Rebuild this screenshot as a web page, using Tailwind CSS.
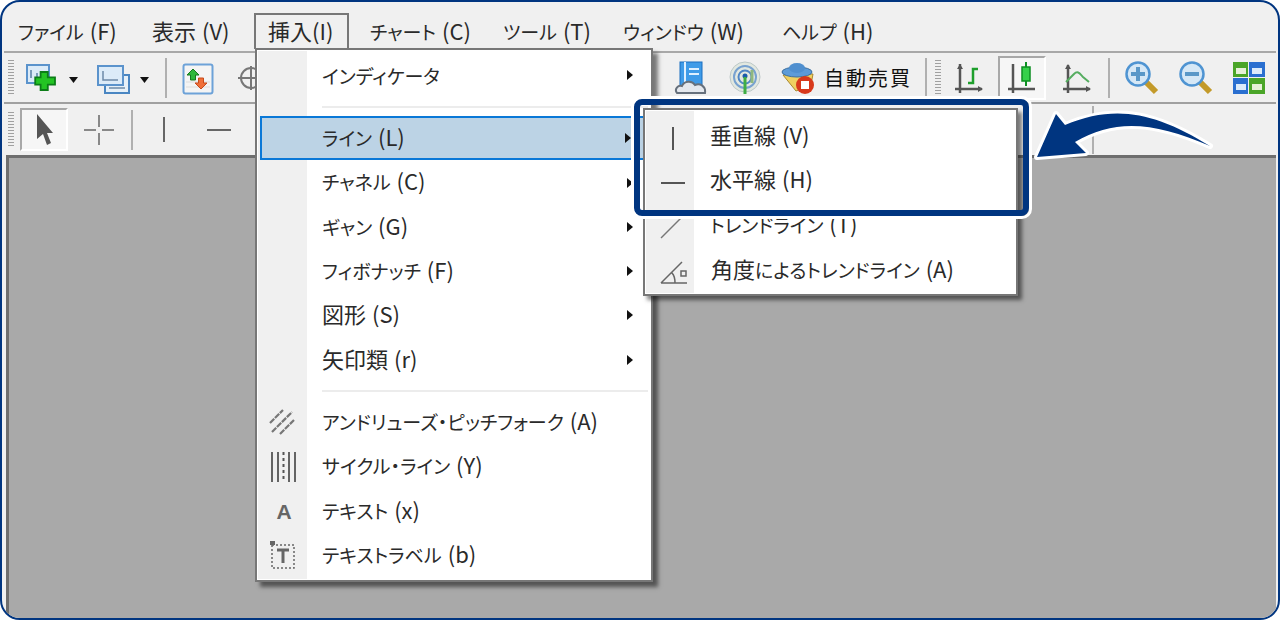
<!DOCTYPE html>
<html lang="ja">
<head>
<meta charset="UTF-8">
<title>挿入メニュー</title>
<script src="https://cdn.jsdelivr.net/npm/@tailwindcss/browser@4"></script>
</head>
<body class="bg-white">
<div class="relative w-[1280px] h-[620px] overflow-hidden border-2 border-[#003580] rounded-[20px] bg-[#f0f0f0] text-[#2a2a2a] text-[19px] [font-feature-settings:'palt'] font-['Noto_Sans_CJK_JP','Noto_Sans',sans-serif] flex flex-col">

  <!-- menu bar -->
  <div class="h-[49px] shrink-0 flex items-center pl-[16px] pt-[6px] leading-none">
    <span class="w-[134px]">ファイル<span class="ml-[1px] text-[22px]"> (F)</span></span>
    <span class="w-[116px] text-[22px]">表示<span class="ml-[1px]"> (V)</span></span>
    <span class="w-[102px] text-[22px]">挿入(I)</span>
    <span class="w-[133px]">チャート<span class="ml-[1px] text-[22px]"> (C)</span></span>
    <span class="w-[120px]">ツール<span class="ml-[1px] text-[22px]"> (T)</span></span>
    <span class="w-[159px]">ウィンドウ<span class="ml-[1px] text-[22px]"> (W)</span></span>
    <span>ヘルプ<span class="ml-[1px] text-[22px]"> (H)</span></span>
  </div>

  <!-- toolbar 1 -->
  <div class="h-[53px] shrink-0 mx-[2px] border-y-2 border-[#a8a8a8] border-b-[#a0a0a0] flex items-center pl-[4px]">
    <div class="w-[6px] h-[36px] bg-[repeating-linear-gradient(#a0a0a0_0,#a0a0a0_1px,transparent_1px,transparent_3px)]"></div>
    <svg class="ml-[12px] mt-[3px]" width="34" height="32" viewBox="0 0 34 32"><rect x="1" y="2" width="22" height="18" fill="#dcebf8" stroke="#5b93cc" stroke-width="2"/><path d="M5 7v8M11 10v4" stroke="#5a7fa5" stroke-width="1.500"/><path d="M14 10h8v6h8v8h-8v6h-8v-6H8v-8h6z" transform="translate(2 0) scale(.9)" fill="#23c423" stroke="#0c7d18" stroke-width="2"/></svg>
    <svg class="ml-[8px] mt-[4px]" width="12" height="8" viewBox="0 0 12 8"><path d="M1 1h9L5.500 7z" fill="#111"/></svg>
    <svg class="ml-[17px] mt-[3px]" width="34" height="32" viewBox="0 0 34 32"><rect x="8" y="12" width="24" height="18" fill="#e6f0f8" stroke="#4a86c2" stroke-width="2"/><rect x="1" y="3" width="25" height="19" fill="#dcebf8" stroke="#5b93cc" stroke-width="2"/><path d="M6 8v9h15M12 25h16" stroke="#6d8aa8" stroke-width="1.500" fill="none"/></svg>
    <svg class="ml-[8px] mt-[4px]" width="12" height="8" viewBox="0 0 12 8"><path d="M1 1h9L5.500 7z" fill="#111"/></svg>
    <div class="ml-[14px] w-[2px] h-[40px] bg-[#b0b0b0]"></div>
    <svg class="ml-[15px] mt-[2px]" width="32" height="32" viewBox="0 0 32 32"><rect x="1.500" y="1.500" width="29" height="29" rx="2" fill="#f4f4f4" stroke="#6da2d8" stroke-width="2"/><path d="M4 19h24M4 24h24" stroke="#dcdcdc"/><path d="M11 6l6 6h-3.500v5h-5v-5H5z" fill="#2fb83a" stroke="#17781f"/><path d="M19 26l-6-6h3.500v-5h5v5H25z" fill="#f0703a" stroke="#c84b1a"/></svg>
    <svg class="ml-[24px]" width="20" height="32" viewBox="0 0 20 32"><circle cx="13" cy="16" r="10" fill="none" stroke="#777" stroke-width="2"/><path d="M0 16h20M13 4v24" stroke="#777" stroke-width="2"/></svg>
    <svg class="ml-[416px]" width="34" height="36" viewBox="0 0 34 36"><rect x="6" y="2" width="22" height="24" fill="#3f9be8" stroke="#1b6fc0"/><path d="M11 2v20M15 9h10M15 14h10" stroke="#dff0ff" stroke-width="2"/><path d="M3 33c-3-4 1-8 5-7 2-5 10-6 13-1 5-2 11 1 10 8z" fill="#e4e8ee" stroke="#66707c" stroke-width="2"/></svg>
    <svg class="ml-[20px]" width="34" height="36" viewBox="0 0 34 36"><circle cx="17" cy="17" r="15" fill="#e2e8e0" stroke="#bcc8c8"/><circle cx="17" cy="17" r="11" fill="none" stroke="#78a2d0" stroke-width="2"/><circle cx="17" cy="17" r="6.500" fill="none" stroke="#4f86c6" stroke-width="2"/><circle cx="17" cy="16" r="2.500" fill="#1b5cab"/><path d="M17 17v17" stroke="#3fae45" stroke-width="3"/><path d="M24 10v13" stroke="#8fb87f" stroke-width="3"/></svg>
    <svg class="ml-[19px]" width="34" height="34" viewBox="0 0 34 34"><path d="M2 14l13 16 15-6 2-11z" fill="#efd060" stroke="#a98830"/><ellipse cx="16" cy="11" rx="15" ry="5" fill="#5c9bd8" stroke="#3c6f9f"/><ellipse cx="16" cy="7" rx="8" ry="5" fill="#4f8fcf"/><circle cx="24" cy="24" r="9" fill="#d8391c"/><rect x="20" y="20" width="8" height="8" fill="#fff"/></svg>
    <span class="ml-[9px] text-[#111] text-[20px] tracking-[2px] leading-none [font-feature-settings:normal]">自動売買</span>
    <div class="ml-[13px] w-[2px] h-[40px] bg-[#b0b0b0]"></div>
    <div class="ml-[8px] w-[6px] h-[36px] bg-[repeating-linear-gradient(#a0a0a0_0,#a0a0a0_1px,transparent_1px,transparent_3px)]"></div>
    <svg class="ml-[13px]" width="30" height="32" viewBox="0 0 30 32"><path d="M1 27h27M6 2v29" stroke="#555" stroke-width="2.500" fill="none"/><path d="M3 7l3-5 3 5zM24 24l5 3-5 3z" fill="#555"/><path d="M14 21h5V7h5" stroke="#1e9f2c" stroke-width="2.500" fill="none"/></svg>
    <div class="ml-[14px] w-[48px] h-[44px] bg-[#f6f6f6] border-2 border-l-[#a8a8a8] border-t-[#a8a8a8] border-r-white border-b-white flex items-center justify-center">
      <svg width="30" height="34" viewBox="0 0 30 34"><path d="M1 28h27M6 3v29" stroke="#555" stroke-width="2.500" fill="none"/><path d="M19 1v24" stroke="#0d8f22" stroke-width="2"/><rect x="15" y="6" width="8" height="14" fill="#35d04a" stroke="#0d8f22" stroke-width="1.500"/></svg>
    </div>
    <svg class="ml-[16px]" width="30" height="32" viewBox="0 0 30 32"><path d="M1 27h27M6 3v28" stroke="#555" stroke-width="2.500" fill="none"/><path d="M3 7l3-5 3 5zM24 24l5 3-5 3z" fill="#555"/><path d="M4 20l8-8c4-4 6 0 9 3l6 5" stroke="#55ad60" stroke-width="2" fill="none"/></svg>
    <div class="ml-[16px] w-[2px] h-[40px] bg-[#b0b0b0]"></div>
    <svg class="ml-[15px]" width="34" height="34" viewBox="0 0 34 34"><path d="M21 21l10 10" stroke="#c39a2a" stroke-width="6"/><circle cx="13" cy="13" r="11.500" fill="#d6e8f6" stroke="#4f94d2" stroke-width="2.500"/><path d="M13 6v14M6 13h14" stroke="#5a98c8" stroke-width="4"/></svg>
    <svg class="ml-[20px]" width="34" height="34" viewBox="0 0 34 34"><path d="M21 21l10 10" stroke="#c39a2a" stroke-width="6"/><circle cx="13" cy="13" r="11.500" fill="#d6e8f6" stroke="#4f94d2" stroke-width="2.500"/><path d="M6 13h14" stroke="#5a98c8" stroke-width="4"/></svg>
    <svg class="ml-[20px]" width="32" height="32" viewBox="0 0 32 32"><rect x="0" y="0" width="15" height="15" fill="#4aa528"/><rect x="16" y="0" width="16" height="15" fill="#2a6fd0"/><rect x="0" y="16" width="15" height="16" fill="#2a6fd0"/><rect x="16" y="16" width="16" height="16" fill="#4aa528"/><path d="M3 6h10v6H3zM19 22h10v6H19z" fill="#e6f0d8"/><path d="M19 6h10v6H19zM3 22h10v6H3z" fill="#dcebfa"/></svg>
  </div>

  <!-- toolbar 2 -->
  <div class="h-[51px] shrink-0 flex items-center pl-[6px]">
    <div class="w-[6px] h-[36px] bg-[repeating-linear-gradient(#a0a0a0_0,#a0a0a0_1px,transparent_1px,transparent_3px)]"></div>
    <div class="ml-[6px] w-[48px] h-[43px] bg-[#f6f6f6] border-2 border-l-[#a8a8a8] border-t-[#a8a8a8] border-r-white border-b-white flex items-center justify-center">
      <svg width="18" height="36" viewBox="0 0 18 36"><path d="M2 2v25l6-5 4 11 4-2-4-10h6z" fill="#555"/></svg>
    </div>
    <svg class="ml-[16px]" width="30" height="30" viewBox="0 0 30 30"><path d="M15 0v12M15 18v12M0 15h12M18 15h12" stroke="#666" stroke-width="1.500"/></svg>
    <div class="ml-[17px] w-[2px] h-[40px] bg-[#b0b0b0]"></div>
    <div class="ml-[30px] w-[2px] h-[25px] bg-[#666]"></div>
    <div class="ml-[42px] w-[24px] h-[2px] bg-[#666]"></div>
    <div class="ml-[861px] w-[2px] h-[48px] bg-[#b0b0b0]"></div>
  </div>

  <!-- chart area -->
  <div class="flex-1 ml-[4px] mr-[2px] bg-[#a9a9a9] border-t-[3px] border-l-[3px] border-[#6e6e6e]"></div>

  <!-- open 挿入 tab -->
  <div class="absolute left-[252px] top-[11px] w-[95px] h-[36px] border-x-2 border-t-2 border-[#777]"></div>

  <!-- 挿入 menu -->
  <div class="absolute left-[253px] top-[46px] w-[398px] h-[534px] bg-white border-2 border-[#777] shadow-[5px_5px_4px_rgba(0,0,0,0.5)] leading-none">
    <div class="absolute left-[0px] top-[0px] bottom-[0px] w-[49px] m-[1px] bg-[#f0f0f0]"></div>
    <div class="relative flex flex-col pt-[3px]">
      <div class="h-[44px] flex items-center justify-between pl-[65px] pr-[18px]"><span>インディケータ</span><svg width="6" height="10"><path d="M0 0l6 5-6 5z" fill="#111"/></svg></div>
      <div class="h-[19px] flex items-center pl-[65px] pr-[3px]"><div class="h-[2px] w-full bg-[#ececec]"></div></div>
      <div class="h-[44px] mx-[3px] flex items-center justify-between pl-[60px] pr-[15px] bg-[#bcd3e5] border-2 border-[#0a78d7]"><span class="-mt-[5px]">ライン<span class="ml-[1px] text-[22px]"> (L)</span></span><svg width="6" height="10"><path d="M0 0l6 5-6 5z" fill="#111"/></svg></div>
      <div class="h-[45px] flex items-center justify-between pl-[65px] pr-[18px]"><span class="-mt-[6px]">チャネル<span class="ml-[1px] text-[22px]"> (C)</span></span><svg width="6" height="10"><path d="M0 0l6 5-6 5z" fill="#111"/></svg></div>
      <div class="h-[44px] flex items-center justify-between pl-[65px] pr-[18px]"><span class="-mt-[4px]">ギャン<span class="ml-[1px] text-[22px]"> (G)</span></span><svg width="6" height="10"><path d="M0 0l6 5-6 5z" fill="#111"/></svg></div>
      <div class="h-[44px] flex items-center justify-between pl-[65px] pr-[18px]"><span class="-mt-[4px]">フィボナッチ<span class="ml-[1px] text-[22px]"> (F)</span></span><svg width="6" height="10"><path d="M0 0l6 5-6 5z" fill="#111"/></svg></div>
      <div class="h-[44px] flex items-center justify-between pl-[65px] pr-[18px]"><span class="-mt-[4px] text-[22px]">図形<span class="ml-[1px]"> (S)</span></span><svg width="6" height="10"><path d="M0 0l6 5-6 5z" fill="#111"/></svg></div>
      <div class="h-[45px] flex items-center justify-between pl-[65px] pr-[18px]"><span class="-mt-[4px] text-[22px]">矢印類<span class="ml-[1px]"> (r)</span></span><svg width="6" height="10"><path d="M0 0l6 5-6 5z" fill="#111"/></svg></div>
      <div class="h-[18px] flex items-center pl-[65px] pr-[3px]"><div class="h-[2px] w-full bg-[#ececec]"></div></div>
      <div class="h-[44px] flex items-center">
        <svg class="ml-[12px]" width="26" height="26" viewBox="0 0 26 26"><path d="M1 14L14 1M3 23L23 3M11 25L25 11" stroke="#777" stroke-width="2.200" stroke-dasharray="6 1"/></svg>
        <span class="ml-[27px] -mt-[4px]">アンドリューズ・ピッチフォーク<span class="ml-[1px] text-[22px]"> (A)</span></span>
      </div>
      <div class="h-[45px] flex items-center">
        <svg class="ml-[13px]" width="26" height="30" viewBox="0 0 26 30"><path d="M2 0v30M8 0v30M25 0v30M19 0v30" stroke="#555" stroke-width="1.800"/><path d="M13.500 0v30" stroke="#555" stroke-width="2" stroke-dasharray="3 3"/></svg>
        <span class="ml-[26px] -mt-[6px]">サイクル・ライン<span class="ml-[1px] text-[22px]"> (Y)</span></span>
      </div>
      <div class="h-[44px] flex items-center">
        <span class="w-[50px] text-center pl-[4px] text-[#666] text-[21px] font-bold font-['Liberation_Sans',sans-serif]">A</span>
        <span class="ml-[15px] -mt-[4px]">テキスト<span class="ml-[1px] text-[22px]"> (x)</span></span>
      </div>
      <div class="h-[44px] flex items-center">
        <svg class="ml-[13px]" width="26" height="28" viewBox="0 0 26 28"><path d="M2 4h22v23H2z" fill="none" stroke="#666" stroke-width="1.500" stroke-dasharray="2 2"/><rect x="0" y="0" width="5" height="4" fill="#666"/><path d="M7 9h12M13 9v13" stroke="#666" stroke-width="3"/></svg>
        <span class="ml-[26px] -mt-[4px]">テキストラベル<span class="ml-[1px] text-[22px]"> (b)</span></span>
      </div>
    </div>
  </div>

  <!-- ライン submenu -->
  <div class="absolute left-[641px] top-[106px] w-[375px] h-[188px] bg-white border-2 border-[#777] shadow-[4px_4px_4px_rgba(0,0,0,0.5)] leading-none">
    <div class="absolute left-[1px] top-[1px] bottom-[1px] w-[48px] bg-[#f0f0f0]"></div>
    <div class="relative flex flex-col pt-[6px]">
      <div class="h-[44px] flex items-center"><div class="ml-[27px] w-[2px] h-[23px] bg-[#555]"></div><span class="ml-[36px] -mt-[9px] text-[22px]">垂直線<span class="ml-[1px]"> (V)</span></span></div>
      <div class="h-[45px] flex items-center"><div class="ml-[16px] w-[24px] h-[2px] bg-[#555]"></div><span class="ml-[25px] -mt-[9px] text-[22px]">水平線<span class="ml-[1px]"> (H)</span></span></div>
      <div class="h-[45px] flex items-center">
        <svg class="ml-[15px] -mt-[4px]" width="26" height="26" viewBox="0 0 26 26"><path d="M1 25L25 1" stroke="#777" stroke-width="1.500"/></svg>
        <span class="ml-[24px] -mt-[10px]">トレンドライン<span class="ml-[1px] text-[22px]"> (T)</span></span>
      </div>
      <div class="h-[44px] flex items-center">
        <svg class="ml-[15px]" width="28" height="26" viewBox="0 0 28 26"><path d="M1 24h26M1 24L22 3M12 14c2 2 3 6 3 10" stroke="#666" stroke-width="1.500" fill="none"/><rect x="21" y="12" width="5" height="5" fill="none" stroke="#666" stroke-width="1.500"/></svg>
        <span class="ml-[23px] -mt-[8px]"><span class="text-[22px]">角度</span>によるトレンドライン<span class="ml-[1px] text-[22px]"> (A)</span></span>
      </div>
    </div>
  </div>

  <!-- callout frame -->
  <div class="absolute left-[629px] top-[94px] w-[401px] h-[123px] rounded-[10px] border-[3px] border-white">
    <div class="w-full h-full rounded-[8px] border-[6px] border-[#003580]"></div>
  </div>

  <!-- callout arrow -->
  <svg class="absolute left-[-2px] top-[-2px]" width="1280" height="620" viewBox="0 0 1280 620" fill="none">
    <path d="M1037 157L1056 114L1065 125C1115 104 1155 112 1210 146C1155 122 1115 118 1075 142L1086 153Z" fill="#003580" stroke="#fff" stroke-width="6" stroke-linejoin="round" paint-order="stroke"/>
  </svg>
</div>
</body>
</html>
